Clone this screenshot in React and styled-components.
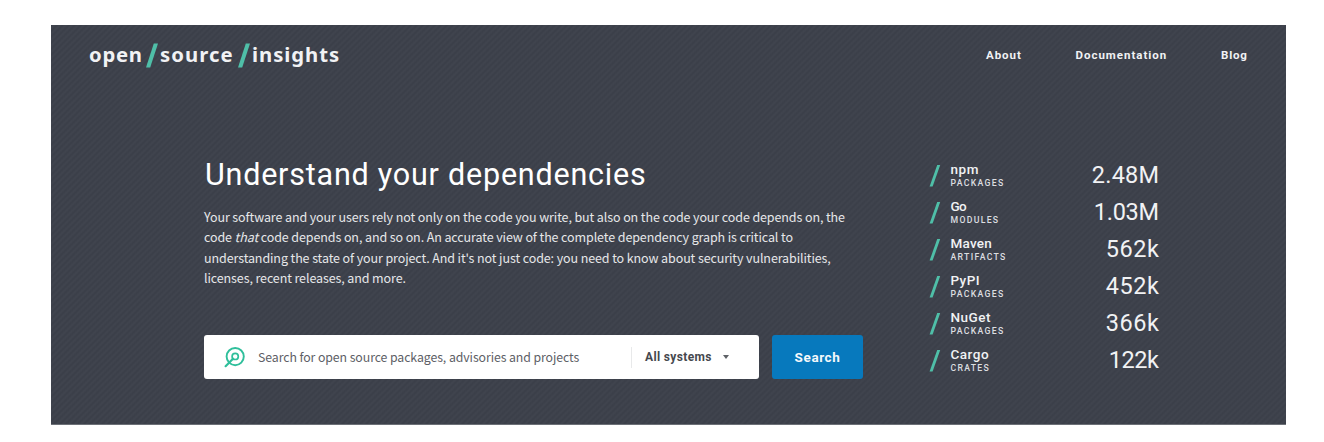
import React from "react";
import styled, { createGlobalStyle } from "styled-components";

const display = `Roboto, "Liberation Sans", sans-serif`;
const body = `"Noto Sans CJK SC", "Noto Sans", sans-serif`;
const teal = "#4fbfa8";

const GlobalStyle = createGlobalStyle`
  * { box-sizing: border-box; }
  body { margin: 0; background: #fff; }
`;

const Page = styled.div`
  padding: 25px 38px 17px 51px;
`;

const Hero = styled.div`
  height: 400px;
  overflow: hidden;
  color: #f1f2f4;
  background: repeating-linear-gradient(135deg, #3b3f49 0, #40444e 2.12px, #3b3f49 4.243px);
  border-bottom: 1px solid #6c7077;
`;

const Header = styled.header`
  display: flex;
  align-items: center;
  justify-content: space-between;
  height: 60px;
  padding: 0 39px 0 38px;
`;

const Logo = styled.div`
  display: flex;
  align-items: center;
  font: 700 20.3px/26px "Noto Sans", "Open Sans", sans-serif;
`;

const LogoWord = styled.span`
  width: ${(p) => p.$width}px;
  padding-bottom: 2px;
  letter-spacing: ${(p) => p.$spacing}px;
  white-space: nowrap;
`;

const LogoSlash = styled.svg`
  width: 12px;
  height: 25px;
  margin: 0 ${(p) => p.$after}px 0 3px;
  flex: none;
`;

const Nav = styled.nav`
  display: flex;
  gap: 53.5px;
  font: 700 11.5px/16px ${display};
`;

const NavLink = styled.a`
  width: ${(p) => p.$width}px;
  letter-spacing: ${(p) => p.$spacing}px;
  white-space: nowrap;
`;

const Content = styled.main`
  display: flex;
  padding: 71px 127px 0 153px;
`;

const Intro = styled.section`
  width: 659px;
  margin-right: 66px;
`;

const Title = styled.h1`
  margin: -1px 0 0 1px;
  font: 400 30.5px/40px ${display};
  letter-spacing: 0.78px;
  white-space: nowrap;
  color: #fff;
`;

const Paragraph = styled.p`
  margin: 12px 0 0;
  font: 400 12.5px/20.35px ${body};
  color: #e6e7e9;
`;

const Line = styled.span`
  display: block;
  white-space: nowrap;
  letter-spacing: -0.105px;
`;

const SearchRow = styled.form`
  display: flex;
  gap: 13px;
  margin-top: 47px;
`;

const SearchBox = styled.div`
  display: flex;
  align-items: center;
  width: 555px;
  height: 43.5px;
  padding: 0 29px 0 20px;
  border-radius: 3px;
  background: #fff;
`;

const SearchIcon = styled.svg`
  width: 21px;
  height: 21px;
  margin-right: 13px;
`;

const Placeholder = styled.span`
  flex: 1;
  font: 400 12.3px/20px ${body};
  letter-spacing: -0.08px;
  color: #5d6066;
  white-space: nowrap;
`;

const Systems = styled.div`
  display: flex;
  align-items: center;
  justify-content: space-between;
  width: 99px;
  height: 21px;
  padding-left: 13px;
  border-left: 1px solid #e8e9ea;
  font: 700 12px/20px ${display};
  letter-spacing: 0.35px;
  color: #45484e;
  white-space: nowrap;
`;

const Caret = styled.span`
  margin-right: 1px;
  border: 3.5px solid transparent;
  border-top: 4px solid #5f6267;
  border-bottom: 0;
`;

const SearchButton = styled.button`
  width: 91px;
  height: 43.5px;
  padding: 0;
  border: 0;
  border-radius: 3px;
  background: #0779bd;
  color: #f4f8fb;
  font: 700 13.5px/20px ${display};
  letter-spacing: 0.6px;
`;

const Stats = styled.ul`
  flex: 1;
  margin: 0;
  padding: 0;
  list-style: none;
`;

const Stat = styled.li`
  display: flex;
  align-items: center;
  height: 37.1px;
`;

const StatSlash = styled.svg`
  width: 12px;
  height: 22px;
  margin: 2px 9.5px 0 0;
`;

const StatLabel = styled.div`
  flex: 1;
  padding-top: 1px;
  white-space: nowrap;
`;

const StatName = styled.div`
  font: 500 13.5px/15px ${display};
  letter-spacing: ${(p) => p.$spacing}px;
`;

const StatKind = styled.div`
  font: 500 8.7px/12px ${display};
  letter-spacing: ${(p) => p.$spacing}px;
  color: #dcdee0;
`;

const StatValue = styled.div`
  font: 400 23.5px/30px ${display};
  letter-spacing: ${(p) => p.$spacing}px;
  margin-right: ${(p) => -p.$spacing}px;
`;

const stats = [
  ["npm", 0.6, "PACKAGES", 1.3, "2.48M", 0.2],
  ["Go", -0.6, "MODULES", 1.3, "1.03M", -0.3],
  ["Maven", 0.25, "ARTIFACTS", 1.3, "562k", 0.6],
  ["PyPI", 0.4, "PACKAGES", 1.3, "452k", 0.6],
  ["NuGet", 0.5, "PACKAGES", 1.3, "366k", 0.6],
  ["Cargo", 0.5, "CRATES", 1.3, "122k", -0.4],
];

function BrandSlash({ after }) {
  return (
    <LogoSlash $after={after} viewBox="0 0 12 25">
      <path d="M7.8 .5H12L4.2 24.5H0z" fill={teal} />
    </LogoSlash>
  );
}

export default function App() {
  return (
    <Page>
      <GlobalStyle />
      <Hero>
        <Header>
          <Logo>
            <LogoWord $width={54} $spacing={0.75}>open</LogoWord>
            <BrandSlash after={2} />
            <LogoWord $width={75} $spacing={1.05}>source</LogoWord>
            <BrandSlash after={2} />
            <LogoWord $width={90} $spacing={0.95}>insights</LogoWord>
          </Logo>
          <Nav>
            <NavLink $width={36} $spacing={0.95}>About</NavLink>
            <NavLink $width={92} $spacing={0.98}>Documentation</NavLink>
            <NavLink $width={26} $spacing={0.8}>Blog</NavLink>
          </Nav>
        </Header>
        <Content>
          <Intro>
            <Title>Understand your dependencies</Title>
            <Paragraph>
              <Line>Your software and your users rely not only on the code you write, but also on the code your code depends on, the</Line>
              <Line>code <i>that</i> code depends on, and so on. An accurate view of the complete dependency graph is critical to</Line>
              <Line>understanding the state of your project. And it's not just code: you need to know about security vulnerabilities,</Line>
              <Line>licenses, recent releases, and more.</Line>
            </Paragraph>
            <SearchRow>
              <SearchBox>
                <SearchIcon viewBox="0 0 21 21" fill="none" stroke="#2fbf9b" strokeLinecap="round">
                  <circle cx="11.2" cy="9.6" r="8.6" strokeWidth="1.9" />
                  <circle cx="11.2" cy="9.4" r="3.1" strokeWidth="1.7" />
                  <path d="M9 11.8 1.6 19.2" strokeWidth="2.2" />
                </SearchIcon>
                <Placeholder>Search for open source packages, advisories and projects</Placeholder>
                <Systems>All systems<Caret /></Systems>
              </SearchBox>
              <SearchButton type="button">Search</SearchButton>
            </SearchRow>
          </Intro>
          <Stats>
            {stats.map(([name, ns, kind, ks, value, vs]) => (
              <Stat key={name}>
                <StatSlash viewBox="0 0 12 22">
                  <path d="M8.2 0h3L3.6 21.5H.6z" fill={teal} />
                </StatSlash>
                <StatLabel>
                  <StatName $spacing={ns}>{name}</StatName>
                  <StatKind $spacing={ks}>{kind}</StatKind>
                </StatLabel>
                <StatValue $spacing={vs}>{value}</StatValue>
              </Stat>
            ))}
          </Stats>
        </Content>
      </Hero>
    </Page>
  );
}
